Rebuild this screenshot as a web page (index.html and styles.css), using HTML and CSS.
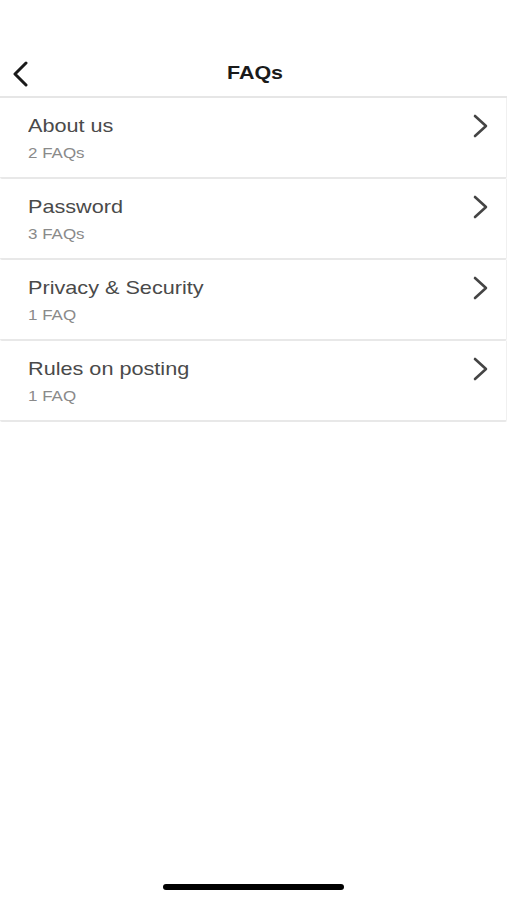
FILE: index.html
```html
<!DOCTYPE html>
<html>
<head>
<meta charset="utf-8">
<link rel="stylesheet" href="styles.css">
</head>
<body>
<div class="screen">
  <header class="nav">
    <svg class="back" width="20" height="26" viewBox="0 0 20 26"><path d="M16 2 L5 13 L16 24" fill="none" stroke="#1a1a1a" stroke-width="3" stroke-linecap="round" stroke-linejoin="round"/></svg>
    <h1 class="title">FAQs</h1>
  </header>
  <ul class="list">
    <li class="row"><div class="text"><div class="name">About us</div><div class="count">2 FAQs</div></div><svg class="chev" width="18" height="24" viewBox="0 0 18 24"><path d="M3 2 L14 12 L3 22" fill="none" stroke="#444" stroke-width="2.6" stroke-linecap="round" stroke-linejoin="round"/></svg></li>
    <li class="row"><div class="text"><div class="name">Password</div><div class="count">3 FAQs</div></div><svg class="chev" width="18" height="24" viewBox="0 0 18 24"><path d="M3 2 L14 12 L3 22" fill="none" stroke="#444" stroke-width="2.6" stroke-linecap="round" stroke-linejoin="round"/></svg></li>
    <li class="row"><div class="text"><div class="name">Privacy &amp; Security</div><div class="count">1 FAQ</div></div><svg class="chev" width="18" height="24" viewBox="0 0 18 24"><path d="M3 2 L14 12 L3 22" fill="none" stroke="#444" stroke-width="2.6" stroke-linecap="round" stroke-linejoin="round"/></svg></li>
    <li class="row"><div class="text"><div class="name">Rules on posting</div><div class="count">1 FAQ</div></div><svg class="chev" width="18" height="24" viewBox="0 0 18 24"><path d="M3 2 L14 12 L3 22" fill="none" stroke="#444" stroke-width="2.6" stroke-linecap="round" stroke-linejoin="round"/></svg></li>
  </ul>
  <div class="spacer"></div>
  <div class="home"></div>
</div>
</body>
</html>
```
FILE: styles.css
```css
* { box-sizing: border-box; margin: 0; padding: 0; }
html, body { width: 507px; height: 900px; background: #fff; overflow: hidden; }
body { font-family: "Liberation Sans", Arial, sans-serif; }
.screen { display: flex; flex-direction: column; height: 900px; }
.nav { height: 98px; padding-top: 48px; position: relative; display: flex; align-items: center; justify-content: center; border-bottom: 2px solid #e6e6e6; }
.back { position: absolute; left: 10px; top: 61px; }
.title { font-size: 19px; font-weight: bold; color: #1a1a1a; margin-top: 2px; transform: scaleX(1.13); padding-left: 3px; }
.list { list-style: none; }
.row { height: 81px; display: flex; align-items: flex-start; justify-content: space-between; padding: 17px 16px 0 28px; border-bottom: 2px solid #e8e8e8; border-right: 1px solid #f0f0f0; border-radius: 0 0 2px 2px; }
.text { display: flex; flex-direction: column; align-items: flex-start; transform: scaleX(1.17); transform-origin: left center; }
.name { font-size: 18.5px; color: #4a4a4a; line-height: 22px; }
.count { font-size: 14.5px; color: #8a8a8a; margin-top: 8px; line-height: 16px; }
.chev { margin-top: -1px; }
.spacer { flex: 1; }
.home { width: 181px; height: 6px; border-radius: 3px; background: #000; margin: 0 auto 10px; }
```
